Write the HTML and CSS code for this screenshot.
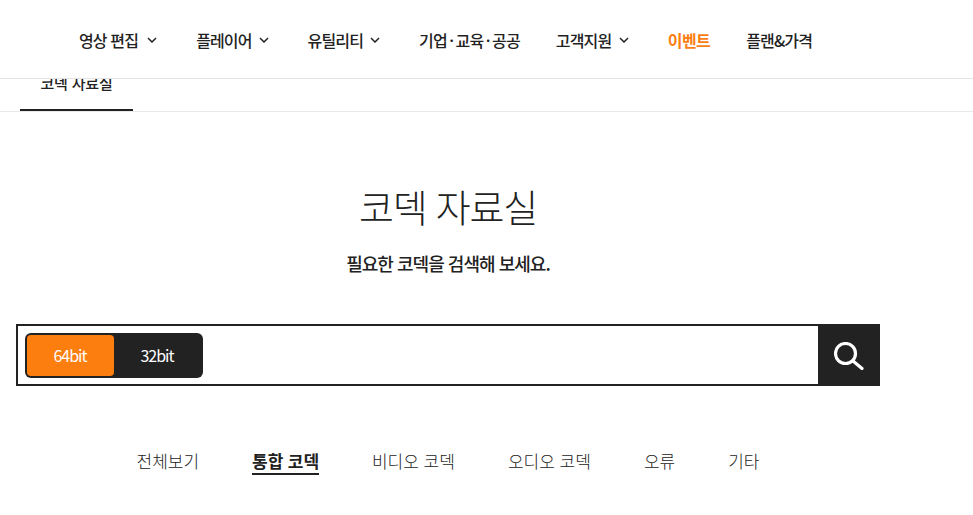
FILE: index.html
```html
<!DOCTYPE html>
<html lang="ko">
<head>
<meta charset="utf-8">
<title>코덱 자료실</title>
<link rel="stylesheet" href="styles.css">
</head>
<body>
<header class="gnb">
  <nav class="gnb-menu">
    <a class="gnb-item">영상 편집<svg class="chev chev-first" viewBox="0 0 10 6"><path d="M1 1l4 4 4-4"/></svg></a>
    <a class="gnb-item">플레이어<svg class="chev" viewBox="0 0 10 6"><path d="M1 1l4 4 4-4"/></svg></a>
    <a class="gnb-item">유틸리티<svg class="chev" viewBox="0 0 10 6"><path d="M1 1l4 4 4-4"/></svg></a>
    <a class="gnb-item">기업<span class="dot">·</span>교육<span class="dot">·</span>공공</a>
    <a class="gnb-item">고객지원<svg class="chev chev-support" viewBox="0 0 10 6"><path d="M1 1l4 4 4-4"/></svg></a>
    <a class="gnb-item gnb-event">이벤트</a>
    <a class="gnb-item">플랜&amp;가격</a>
  </nav>
</header>
<div class="subnav">
  <a class="subnav-tab">코덱 자료실</a>
</div>
<main class="content">
  <h1 class="title">코덱 자료실</h1>
  <p class="subtitle">필요한 코덱을 검색해 보세요.</p>
  <form class="search">
    <div class="bits">
      <span class="bit bit-on">64bit</span>
      <span class="bit">32bit</span>
    </div>
    <div class="search-field"></div>
    <div class="search-btn">
      <svg class="search-icon" viewBox="0 0 30 28"><circle cx="11.5" cy="11.5" r="10"/><path d="M19 19l9 7.5"/></svg>
    </div>
  </form>
  <ul class="cats">
    <li class="cat">전체보기</li>
    <li class="cat cat-on">통합 코덱</li>
    <li class="cat">비디오 코덱</li>
    <li class="cat">오디오 코덱</li>
    <li class="cat">오류</li>
    <li class="cat">기타</li>
  </ul>
</main>
</body>
</html>
```
FILE: styles.css
```css
* { box-sizing: border-box; }
html, body { margin: 0; padding: 0; height: 515px; overflow: hidden; background: #fff; }
body { font-family: "Noto Sans CJK KR", "Noto Sans", sans-serif; color: #222; }

.gnb {
  position: absolute;
  top: 0; left: 0; right: 0;
  height: 79px;
  background: #fff;
  border-bottom: 1px solid #e4e4e4;
  z-index: 2;
}
.gnb-menu {
  display: flex;
  align-items: center;
  gap: 36px;
  height: 78px;
  padding: 2px 0 0 79px;
}
.gnb-item {
  display: flex;
  align-items: center;
  font-size: 16px;
  font-weight: 500;
  letter-spacing: -0.85px;
  color: #222;
  white-space: nowrap;
}
.dot { margin: 0 2.4px; }
.gnb-event { color: #fb7e14; font-weight: 700; letter-spacing: -0.6px; }
.chev {
  width: 10px; height: 6px;
  margin: 0 3px 0 7px;
  fill: none;
  stroke: #222;
  stroke-width: 1.5;
}
.chev-first { margin-left: 9px; }
.chev-support { margin-left: 7.5px; }

.subnav {
  height: 112px;
  padding: 0 0 0 20px;
  border-bottom: 1px solid #e9e9e9;
  display: flex;
  align-items: flex-end;
}
.subnav-tab {
  width: 113px;
  height: 58px;
  display: flex;
  justify-content: center;
  align-items: center;
  padding-top: 2px;
  font-size: 15px;
  font-weight: 500;
  letter-spacing: -0.2px;
  border-bottom: 2px solid #222;
}

.content {
  width: 864px;
  margin-left: 16px;
}
.title {
  margin: 66px 0 0;
  font-size: 38px;
  line-height: 56px;
  font-weight: 300;
  letter-spacing: -1.2px;
  text-align: center;
}
.subtitle {
  margin: 17px 0 0;
  font-size: 18px;
  line-height: 24px;
  font-weight: 500;
  letter-spacing: -0.97px;
  text-align: center;
}
.search {
  display: flex;
  height: 62px;
  margin-top: 49px;
  border: 2px solid #222;
}
.bits {
  display: flex;
  width: 178px;
  height: 45px;
  margin: 7px 0 0 7px;
  padding: 2px;
  background: #222;
  border-radius: 6px;
}
.bit {
  width: 87px;
  display: flex;
  align-items: center;
  justify-content: center;
  padding: 0 1px 2px 0;
  color: #fff;
  font-size: 16px;
  letter-spacing: -1px;
  border-radius: 4px;
}
.bit-on { background: #fb7e0f; }
.search-field { flex: 1; }
.search-btn {
  width: 62px;
  margin: -2px -2px -2px 0;
  background: #222;
  display: flex;
  align-items: center;
  justify-content: center;
}
.search-icon {
  width: 30px; height: 28px;
  margin-top: 2px;
  fill: none;
  stroke: #fff;
  stroke-width: 3.2;
  stroke-linecap: round;
}
.cats {
  list-style: none;
  display: flex;
  justify-content: center;
  gap: 53px;
  margin: 60px 0 0;
  padding: 0;
}
.cat {
  font-size: 17px;
  line-height: 30px;
  font-weight: 300;
  white-space: nowrap;
}
.cat-on {
  font-weight: 700;
  letter-spacing: -0.1px;
  line-height: 26px;
  height: 27px;
  margin-top: 2px;
  border-bottom: 2px solid #222;
}
```
